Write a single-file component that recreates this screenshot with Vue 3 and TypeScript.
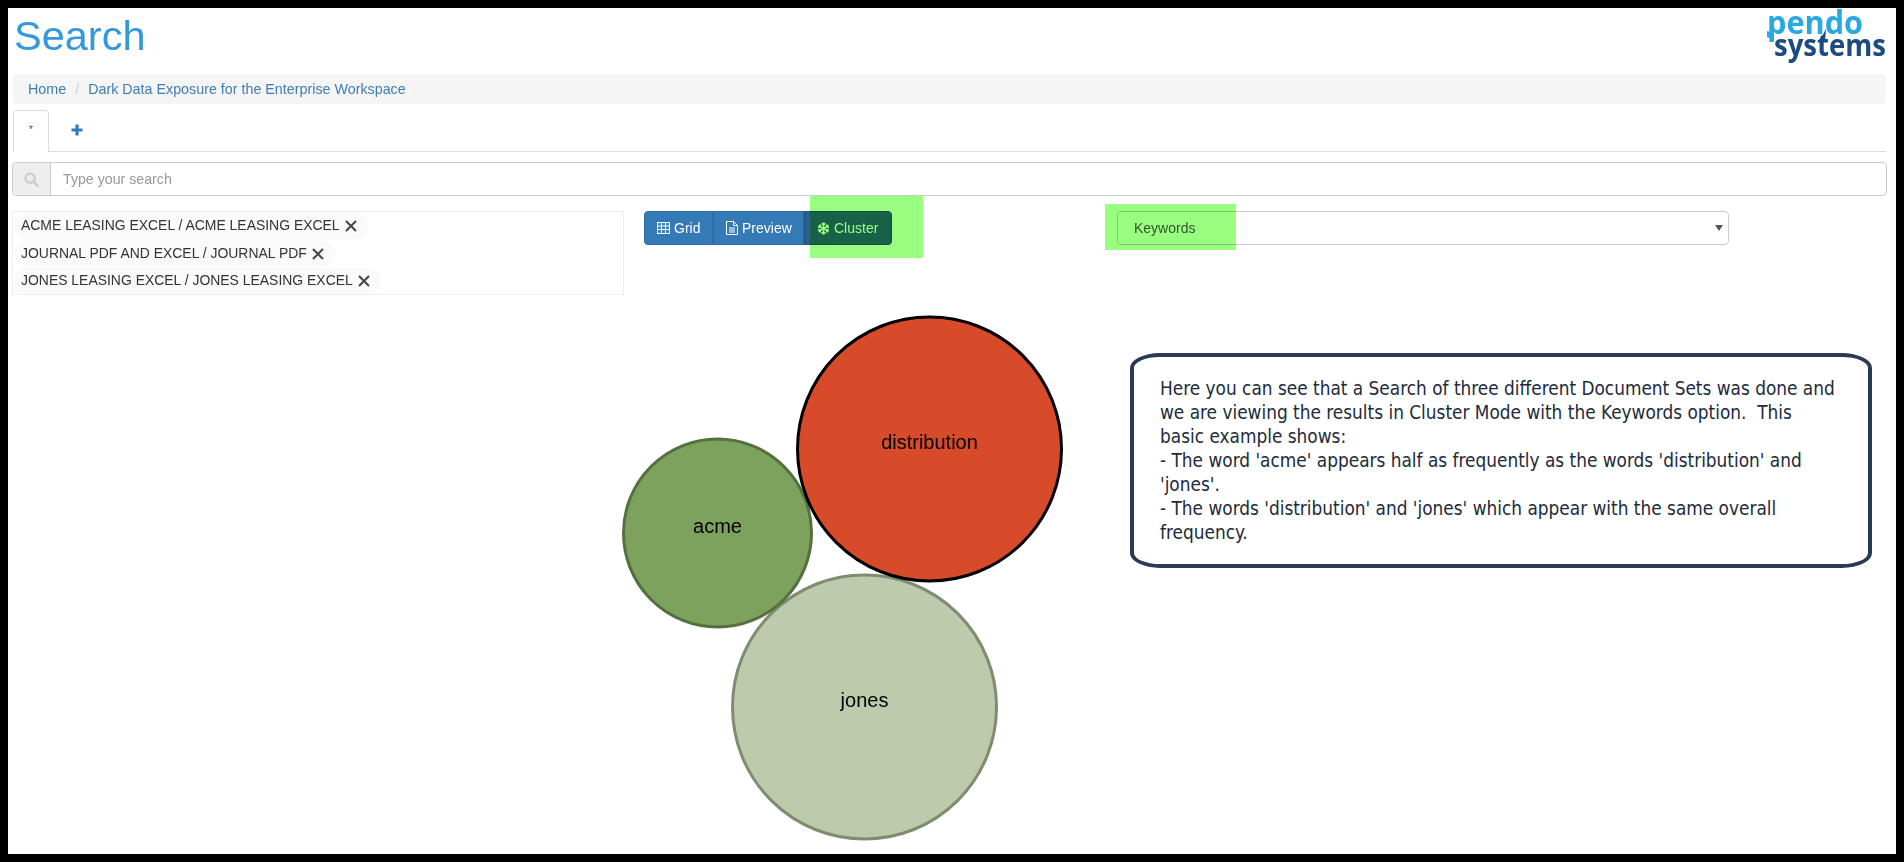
<script setup lang="ts">
const tags: string[] = [
  'ACME LEASING EXCEL / ACME LEASING EXCEL',
  'JOURNAL PDF AND EXCEL / JOURNAL PDF',
  'JONES LEASING EXCEL / JONES LEASING EXCEL',
]
const lines: string[] = [
  'Here you can see that a Search of three different Document Sets was done and',
  'we are viewing the results in Cluster Mode with the Keywords option.\u00a0 This',
  'basic example shows:',
  "- The word 'acme' appears half as frequently as the words 'distribution' and",
  "'jones'.",
  "- The words 'distribution' and 'jones' which appear with the same overall",
  'frequency.',
]
const circles = [
  { label: 'jones', cx: 864.5, cy: 707, r: 132, fill: '#bdcbac', stroke: '#7f8c72' },
  { label: 'acme', cx: 717.5, cy: 533, r: 94, fill: '#7ca25d', stroke: '#54703f' },
  { label: 'distribution', cx: 929.5, cy: 449, r: 132, fill: '#d84b2a', stroke: '#000000' },
]
const arms: number[] = [0, 60, 120, 180, 240, 300]
</script>

<template>
  <div class="frame">
    <header class="head">
      <h1 class="title">Search</h1>
      <svg class="logo" width="130" height="60" viewBox="0 0 130 60">
        <text x="1" y="26" class="logo-a" textLength="96" lengthAdjust="spacingAndGlyphs">pendo</text>
        <path d="M1 23l7 2v7l-7-3z" fill="#2aa9e0"/>
        <text x="8" y="48" class="logo-b" textLength="112" lengthAdjust="spacingAndGlyphs">systems</text>
        <path d="M60 21l-1 13h-6z" fill="#1d4a7f"/>
      </svg>
    </header>
    <nav class="crumb">
      <a>Home</a><span class="sep">/</span><a>Dark Data Exposure for the Enterprise Workspace</a>
    </nav>
    <div class="tabs">
      <div class="tab">*</div>
      <div class="add">
        <svg width="12" height="12" viewBox="0 0 12 12"><path d="M4.4 0.5h3.2v3.9h3.9v3.2H7.6v3.9H4.400V7.600H.5V4.400h3.900z" fill="#337ab7"/></svg>
      </div>
    </div>
    <div class="search">
      <span class="addon">
        <svg width="15" height="15" viewBox="0 0 15 15" fill="none" stroke="#c3d0da" stroke-width="2.4"><circle cx="6.2" cy="6.2" r="4.6"/><path d="M9.6 9.6l4 4.2" stroke-linecap="round"/></svg>
      </span>
      <span class="ph">Type your search</span>
    </div>
    <div class="controls">
      <div class="tagbox">
        <div v-for="t in tags" :key="t" class="tag">
          <span class="tag-text">{{ t }}</span>
          <svg width="12" height="12" viewBox="0 0 12 12"><path d="M1 1l10 10M11 1L1 11" stroke="#444" stroke-width="2" fill="none"/></svg>
        </div>
      </div>
      <div class="btns">
        <span class="btn b1">
          <svg width="13" height="12" viewBox="0 0 13 12" fill="none" stroke="#fff" stroke-width="1.100"><rect x=".5" y=".5" width="12" height="11"/><path d="M.5 4h12M.5 7.500h12M4.500 .5v11M8.500 .5v11"/></svg>
          Grid
        </span>
        <span class="btn b2">
          <svg width="12" height="14" viewBox="0 0 12 14" fill="none" stroke="#fff" stroke-width="1"><path d="M.5.5h7l4 4v9H.5zM7.500.5v4h4M3 7h6M3 9h6M3 11h6"/></svg>
          Preview
        </span>
        <span class="btn b3">
          <svg width="13" height="13" viewBox="0 0 13 13" fill="none" stroke="#fff" stroke-width="1.500">
            <path v-for="a in arms" :key="a" d="M6.500 6.500V.6M4.700 1.400L6.500 3.200L8.300 1.400" :transform="`rotate(${a} 6.500 6.500)`"/>
          </svg>
          Cluster
        </span>
        <i class="mark m1"></i>
      </div>
      <div class="select">
        <span>Keywords</span>
        <svg width="8" height="6" viewBox="0 0 8 6"><path d="M0 0h8L4 6z" fill="#555"/></svg>
        <i class="mark m2"></i>
      </div>
    </div>
    <main class="canvas">
      <svg class="chart" width="1888" height="559" viewBox="8 295 1888 559">
        <g v-for="c in circles" :key="c.label">
          <circle :cx="c.cx" :cy="c.cy" :r="c.r" :fill="c.fill" :stroke="c.stroke" stroke-width="3"/>
          <text :x="c.cx" :y="c.cy" text-anchor="middle" class="lbl">{{ c.label }}</text>
        </g>
      </svg>
      <aside class="note">
        <div v-for="(l, i) in lines" :key="i">{{ l }}</div>
      </aside>
    </main>
  </div>
</template>

<style>
html, body { margin: 0; padding: 0; background: #000; }
</style>

<style scoped>
.frame {
  box-sizing: border-box;
  width: 1904px;
  height: 862px;
  border: 8px solid #000;
  background: #fff;
  overflow: hidden;
  font-family: "Liberation Sans", Arial, sans-serif;
  font-size: 14px;
  color: #333;
}
.head { display: flex; justify-content: space-between; height: 66px; padding: 0 0 0 6px; }
.title { margin: 5px 0 0; font-size: 41.5px; line-height: 46px; font-weight: 400; color: #3498db; }
.logo-a { font-family: "Open Sans", sans-serif; font-weight: 700; font-size: 32px; fill: #2aa9e0; }
.logo-b { font-family: "Open Sans", sans-serif; font-weight: 700; font-size: 30px; fill: #1d4a7f; }
.crumb {
  margin: 0 10px 0 5px; height: 30px; background: #f5f5f5; border-radius: 4px;
  display: flex; align-items: center; padding-left: 15px; color: #3f7db5; font-size: 14.3px;
}
.sep { color: #ccc; padding: 0 9px; }
.tabs { margin: 6px 10px 0 5px; height: 42px; box-sizing: border-box; display: flex; border-bottom: 1px solid #ddd; }
.tab {
  width: 36px; height: 42px; flex: none; box-sizing: border-box; border: 1px solid #ddd; border-bottom: 0;
  border-radius: 4px 4px 0 0; background: #fff; text-align: center; padding-top: 12px; color: #555; font-size: 11px;
}
.add { width: 55px; display: flex; align-items: center; justify-content: center; padding-bottom: 1px; }
.search {
  margin: 10px 9px 0 4px; height: 34px; box-sizing: border-box; border: 1px solid #ccc; border-radius: 4px;
  display: flex; align-items: center;
}
.addon {
  width: 38px; height: 100%; box-sizing: border-box; background: #eee; border-right: 1px solid #ccc; display: flex;
  align-items: center; justify-content: center; border-radius: 3px 0 0 3px;
}
.ph { padding-left: 12px; color: #999; font-size: 14.2px; }
.controls { display: flex; align-items: flex-start; margin-top: 15px; padding-left: 4px; position: relative; }
.tagbox {
  width: 612px; height: 84px; box-sizing: border-box; border: 1px solid #eee; padding: 1px 0 0 1px;
  display: flex; flex-direction: column; align-items: flex-start; gap: 2px; flex: none;
}
.tag {
  height: 26px; background: #fafafa; border-radius: 13px; padding: 0 11px 0 7px; display: flex; align-items: center;
  gap: 5px; font-size: 13.95px; color: #333; box-sizing: border-box;
}
.tag-text { margin-top: -2px; }
.btns { margin-left: 20px; display: flex; height: 34px; color: #fff; width: 248px; position: relative; flex: none; }
.btn { display: flex; align-items: center; gap: 4px; box-sizing: border-box; background: #337ab7; border: 1px solid #2e6da4; }
.b1 { width: 69px; padding-left: 12px; border-radius: 4px 0 0 4px; }
.b2 { width: 91px; padding-left: 12px; }
.b3 { width: 88px; padding-left: 12px; background: #286090; border-color: #204d74; border-radius: 0 4px 4px 0; }
.select {
  margin-left: 225px; width: 612px; height: 34px; box-sizing: border-box; border: 1px solid #ccc; border-radius: 4px;
  display: flex; align-items: center; justify-content: space-between; padding: 0 5px 0 16px; color: #555; position: relative;
}
.mark { position: absolute; background: #99ff80; mix-blend-mode: multiply; }
.m1 { left: 166px; top: -15px; width: 113px; height: 62px; }
.m2 { left: -13px; top: -8px; width: 131px; height: 46px; }
.canvas { position: relative; }
.chart { position: absolute; left: 0; top: 0; }
.lbl { font-family: "Liberation Sans", Arial, sans-serif; font-size: 20px; fill: #000; }
.note {
  position: absolute; left: 1122px; top: 58px; width: 742px; height: 215px; box-sizing: border-box;
  border: 4px solid #2b3a55; border-radius: 30px / 15px; background: #fff;
  padding: 20px 0 0 26px; font-family: "DejaVu Sans Condensed", "DejaVu Sans", sans-serif; font-size: 18.85px; line-height: 24px; color: #222b3c; white-space: pre;
}
</style>
